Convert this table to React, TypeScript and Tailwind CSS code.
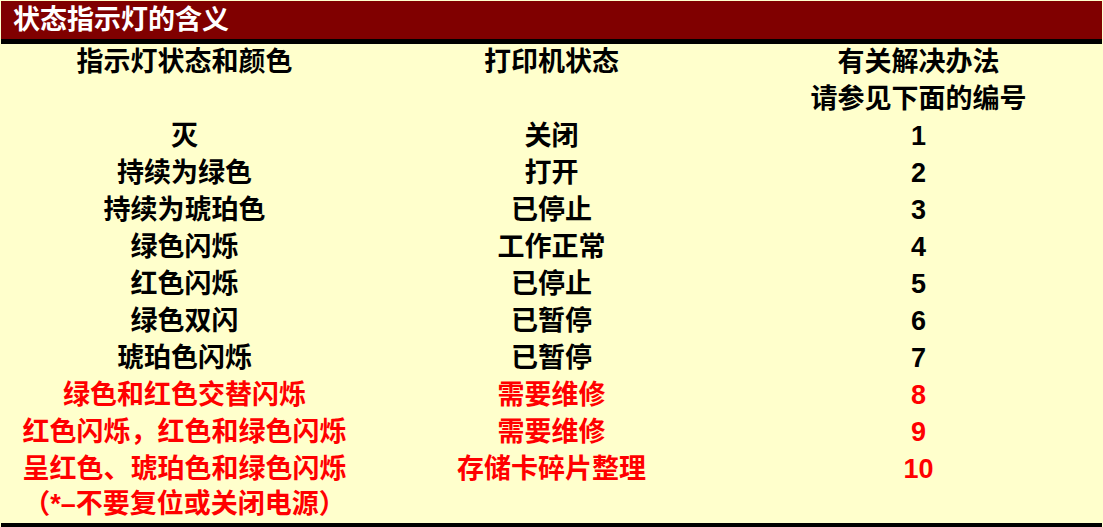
import React from "react";

type Row = {
	state: string[];
	printer: string;
	fix: string;
	red?: boolean;
};

const rows: Row[] = [
	{ state: ["灭"], printer: "关闭", fix: "1" },
	{ state: ["持续为绿色"], printer: "打开", fix: "2" },
	{ state: ["持续为琥珀色"], printer: "已停止", fix: "3" },
	{ state: ["绿色闪烁"], printer: "工作正常", fix: "4" },
	{ state: ["红色闪烁"], printer: "已停止", fix: "5" },
	{ state: ["绿色双闪"], printer: "已暂停", fix: "6" },
	{ state: ["琥珀色闪烁"], printer: "已暂停", fix: "7" },
	{ state: ["绿色和红色交替闪烁"], printer: "需要维修", fix: "8", red: true },
	{ state: ["红色闪烁，红色和绿色闪烁"], printer: "需要维修", fix: "9", red: true },
	{
		state: ["呈红色、琥珀色和绿色闪烁", "（*–不要复位或关闭电源）"],
		printer: "存储卡碎片整理",
		fix: "10",
		red: true,
	},
];

export default function App() {
	return (
		<div
			className="w-[1103px] h-[527px] bg-[#ffffcc] pt-[1px] pl-[1px] pr-[1px] flex flex-col overflow-hidden font-bold text-[27px]"
			style={{ fontFamily: '"Liberation Sans", "Noto Sans CJK SC", sans-serif' }}
		>
			{/* Title bar */}
			<div className="h-[38px] bg-[#800000] border-b-[5px] border-black box-content flex items-center pl-3 text-white leading-none shrink-0">
				状态指示灯的含义
			</div>

			{/* Table */}
			<div className="flex-1 min-h-0 text-black leading-[37px]">
				<div className="grid grid-cols-3 text-center">
					<div>指示灯状态和颜色</div>
					<div>打印机状态</div>
					<div>
						<div>有关解决办法</div>
						<div>请参见下面的编号</div>
					</div>
				</div>
				{rows.map((row, i) => (
					<div
						key={i}
						className={`grid grid-cols-3 text-center ${row.red ? "text-[#ff0000]" : "text-black"}`}
					>
						<div>
							{row.state.map((s, j) => (
								<div key={s} className={j > 0 ? "leading-[33px]" : ""}>
									{s}
								</div>
							))}
						</div>
						<div>{row.printer}</div>
						<div>{row.fix}</div>
					</div>
				))}
			</div>

			{/* Bottom rule */}
			<div className="h-[4px] bg-black shrink-0" />
		</div>
	);
}
